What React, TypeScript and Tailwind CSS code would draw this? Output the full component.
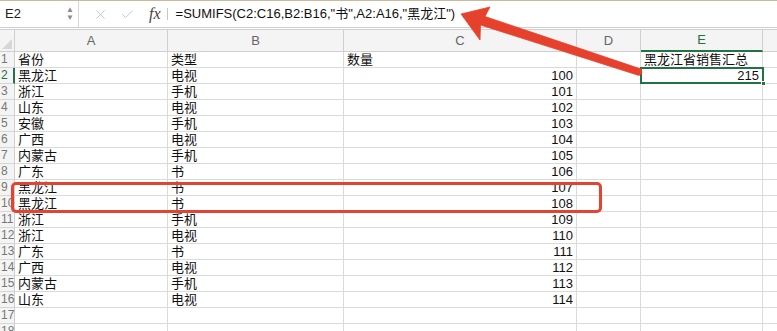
import { X, Check } from 'lucide-react'

const rows: [string, string, string][] = [
  ['省份', '类型', '数量'],
  ['黑龙江', '电视', '100'],
  ['浙江', '手机', '101'],
  ['山东', '电视', '102'],
  ['安徽', '手机', '103'],
  ['广西', '电视', '104'],
  ['内蒙古', '手机', '105'],
  ['广东', '书', '106'],
  ['黑龙江', '书', '107'],
  ['黑龙江', '书', '108'],
  ['浙江', '手机', '109'],
  ['浙江', '电视', '110'],
  ['广东', '书', '111'],
  ['广西', '电视', '112'],
  ['内蒙古', '手机', '113'],
  ['山东', '电视', '114'],
  ['', '', ''],
  ['', '', ''],
]

const font = { fontFamily: '"Liberation Sans", "Noto Sans CJK SC", sans-serif' }
const grid = 'grid grid-cols-[15px_153px_176px_233px_64px_122px_1fr]'
const cell = 'border-r border-b border-[#dadada] h-[16px] text-[13px] leading-[15px] text-[#111] px-[3px] whitespace-nowrap overflow-visible'

function App() {
  return (
    <div className="relative w-[777px] h-[331px] overflow-hidden bg-white" style={font}>
      {/* formula bar */}
      <div className="h-[28px] flex items-center border-t border-[#c9b99a] border-b border-b-[#cfcfcf] bg-white">
        <div className="w-[79px] h-full flex items-center justify-between pl-[5px] pr-[4px] border-r border-[#d6d6d6]">
          <span className="text-[13px] text-[#222]">E2</span>
          <span className="flex flex-col text-[#8a8a8a] text-[8px] leading-[8px]">
            <span>▲</span>
            <span>▼</span>
          </span>
        </div>
        <X className="ml-[14px] w-[15px] h-[15px] text-[#c4c4c4]" strokeWidth={1.5} />
        <Check className="ml-[12px] w-[15px] h-[15px] text-[#c4c4c4]" strokeWidth={1.5} />
        <span className="ml-[14px] text-[16px] italic text-[#444]" style={{ fontFamily: '"Liberation Serif", serif' }}>
          fx
        </span>
        <span className="ml-[6px] w-px h-[12px] bg-[#c8c8c8]" />
        <span className="ml-[8px] text-[13px] text-[#111]">
          =SUMIFS(C2:C16,B2:B16,"书",A2:A16,"黑龙江")
        </span>
      </div>
      <div className="h-[1px] bg-white" />

      {/* column headers */}
      <div className={`${grid} h-[23px] border-t border-[#d0d0d0] bg-[#f4f4f4]`}>
        <div className="relative border-r border-b border-[#cfcfcf]">
          <div className="absolute right-[2px] bottom-[2px] w-0 h-0 border-l-[10px] border-l-transparent border-b-[10px] border-b-[#d6d6d6]" />
        </div>
        {['A', 'B', 'C', 'D'].map((c) => (
          <div key={c} className="border-r border-b border-[#cfcfcf] flex items-center justify-center text-[13px] text-[#666]">
            {c}
          </div>
        ))}
        <div className="border-r border-[#cfcfcf] border-b-2 border-b-[#217346] flex items-center justify-center text-[13px] text-[#217346]">
          E
        </div>
        <div className="border-b border-[#cfcfcf]" />
      </div>

      {/* rows */}
      {rows.map((r, i) => {
        const n = i + 1
        return (
          <div key={n} className={grid}>
            <div
              className={`h-[16px] border-b border-[#d6d6d6] bg-[#f4f4f4] text-[12px] leading-[15px] pl-[1px] ${
                n === 2 ? 'border-r-2 border-r-[#217346] text-[#217346]' : 'border-r border-r-[#cfcfcf] text-[#777]'
              }`}
            >
              {n}
            </div>
            <div className={cell}>{r[0]}</div>
            <div className={cell}>{r[1]}</div>
            <div className={`${cell} ${n > 1 ? 'text-right' : ''}`}>{r[2]}</div>
            <div className={cell} />
            <div className={`${cell} ${n === 2 ? 'text-right' : ''}`}>
              {n === 1 ? '黑龙江省销售汇总' : n === 2 ? '215' : ''}
            </div>
            <div className="border-b border-[#dadada] h-[16px]" />
          </div>
        )
      })}

      {/* selected cell E2 */}
      <div className="absolute left-[640px] top-[67px] w-[124px] h-[17px] border-2 border-[#217346]">
        <div className="absolute -right-[4px] -bottom-[4px] w-[5px] h-[5px] bg-[#217346] border border-white" />
      </div>

      {/* red highlight box */}
      <div className="absolute left-[11px] top-[182px] w-[591px] h-[31px] border-[3px] border-[#e3432f] rounded-[5px] pointer-events-none" />

      {/* red arrow */}
      <svg className="absolute left-0 top-0 pointer-events-none" width="777" height="331">
        <polygon
          points="461,14 490,7 485,16.5 641,69 642,73 639,75.5 480.5,25 480,40"
          fill="#e5412d"
          stroke="#e5412d"
          strokeWidth="0.8"
          strokeLinejoin="round"
        />
      </svg>
    </div>
  )
}

export default App
